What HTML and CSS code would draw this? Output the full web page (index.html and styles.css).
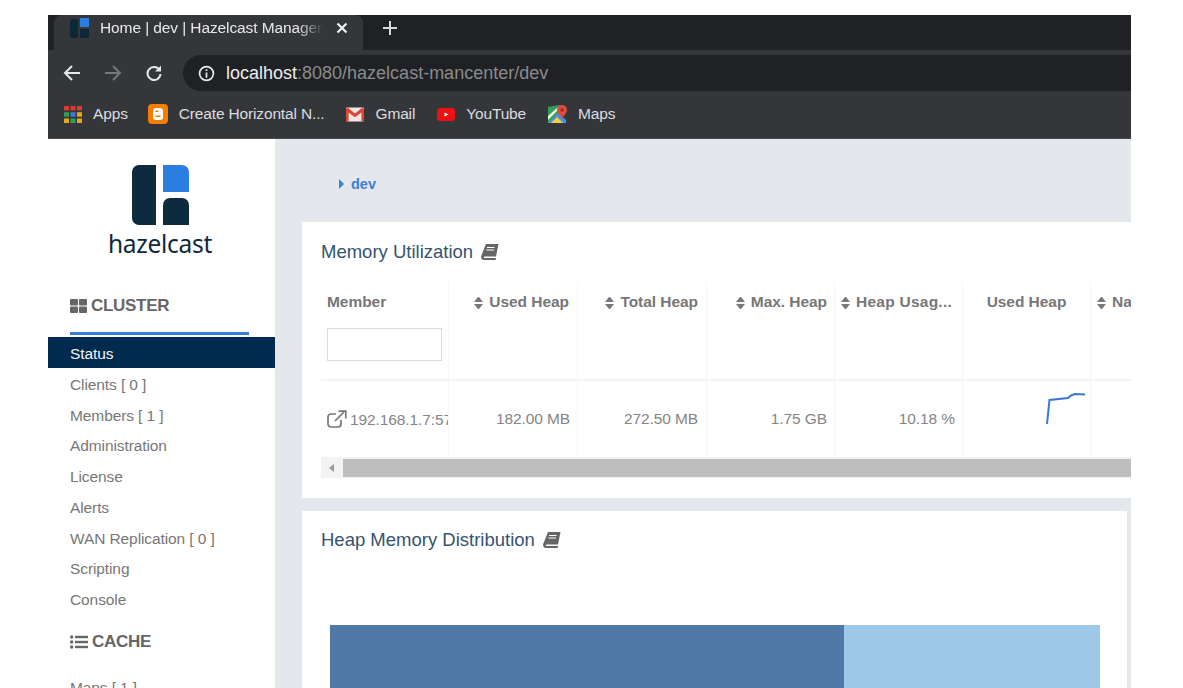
FILE: index.html
```html
<html>
  <head>
    <link rel="stylesheet" href="styles.css">
    <title>Home | dev | Hazelcast Management Center</title>
  </head>
  <body>
    <div class="window">
      <div class="tabstrip">
        <div class="tab">
          <svg class="favicon" viewBox="0 0 19 20"><rect x="0" y="1" width="8" height="19" rx="2" fill="#0c2736"/><rect x="10" y="0" width="9" height="9" fill="#2a7de1"/><rect x="10" y="11" width="9" height="9" fill="#0c2736"/></svg>
          <span class="tab-title">Home | dev | Hazelcast Managem</span>
          <svg class="tab-close" viewBox="0 0 12 12"><path d="M1.500 1.500l9 9M10.500 1.500l-9 9"/></svg>
        </div>
        <svg class="tab-new" viewBox="0 0 16 16"><path d="M8 1v14M1 8h14"/></svg>
      </div>
      <div class="toolbar">
        <svg class="nav" viewBox="0 0 18 18"><path d="M17 9H2M9 2L2 9l7 7"/></svg>
        <svg class="nav nav-off" viewBox="0 0 18 18"><path d="M1 9h15M9 2l7 7-7 7"/></svg>
        <svg class="nav" viewBox="0 0 18 18"><path d="M14.500 6A6.500 6.500 0 1 0 15.500 10"/><path class="fill" d="M16 1.500v6h-6z"/></svg>
        <div class="omnibox">
          <svg class="info" viewBox="0 0 16 16"><circle cx="8" cy="8" r="6.500"/><path d="M8 7v5M8 4v1.600"/></svg>
          <span class="host">localhost</span><span class="path">:8080/hazelcast-mancenter/dev</span>
        </div>
      </div>
      <div class="bookmarks">
        <div class="bookmark bookmark-apps">
          <svg class="bm-icon" viewBox="0 0 18 17">
            <rect x="0" y="0" width="5" height="4.500" fill="#d9392f"/><rect x="6.500" y="0" width="5" height="4.500" fill="#d9392f"/><rect x="13" y="0" width="5" height="4.500" fill="#d9392f"/>
            <rect x="0" y="6.200" width="5" height="4.500" fill="#2f9e57"/><rect x="6.500" y="6.200" width="5" height="4.500" fill="#3b78d8"/><rect x="13" y="6.200" width="5" height="4.500" fill="#e6a817"/>
            <rect x="0" y="12.500" width="5" height="4.500" fill="#e6a817"/><rect x="6.500" y="12.500" width="5" height="4.500" fill="#2f9e57"/><rect x="13" y="12.500" width="5" height="4.500" fill="#e6a817"/>
          </svg>
          Apps
        </div>
        <div class="bookmark">
          <svg class="bm-icon bm-wide" viewBox="0 0 20 20"><rect width="20" height="20" rx="4" fill="#f57d00"/><rect x="5" y="4" width="10" height="12" rx="3" fill="#fff"/><path d="M7.500 7.300h3M7.500 12.300h5" stroke="#f57d00" stroke-width="1.600"/></svg>
          Create Horizontal N...
        </div>
        <div class="bookmark">
          <svg class="bm-icon" viewBox="0 0 18 14"><rect width="18" height="14" rx="1" fill="#f3e6e3"/><path d="M0 1.500V14h2.600V5L9 9.800 15.400 5V14H18V1.500L16.500 0 9 6 1.500 0z" fill="#d8453b"/></svg>
          Gmail
        </div>
        <div class="bookmark">
          <svg class="bm-icon" viewBox="0 0 18 14"><rect width="18" height="13" y="0.500" rx="3.500" fill="#ee1111"/><path d="M7.500 5l4 2-4 2z" fill="#fff"/></svg>
          YouTube
        </div>
        <div class="bookmark">
          <svg class="bm-icon bm-maps" viewBox="0 0 19 18"><path d="M0 2l12-2v18H0z" fill="#2fa35a"/><path d="M0 18L10 8l8 7v3z" fill="#4a90e2"/><path d="M0 11L9 3h3L0 15z" fill="#f4efe0"/><path d="M3 18l6-6 6 6z" fill="#f3cf45"/><path d="M14 0a5 5 0 0 1 5 5c0 3-3 5-5 9-2-4-5-6-5-9a5 5 0 0 1 5-5z" fill="#dd4b3e"/><circle cx="14" cy="5" r="1.800" fill="#9e2a20"/></svg>
          Maps
        </div>
      </div>

      <div class="app">
        <div class="sidebar">
          <div class="logo">
            <svg class="logo-mark" viewBox="0 0 57 60">
              <path d="M7 0h17v60H7a7 7 0 0 1-7-7V7a7 7 0 0 1 7-7z" fill="#0d2b3e"/>
              <path d="M31 0h19a7 7 0 0 1 7 7v20H31z" fill="#2a7de1"/>
              <path d="M38 33h12a7 7 0 0 1 7 7v20H31V40a7 7 0 0 1 7-7z" fill="#0d2b3e"/>
            </svg>
            <div class="logo-text">hazelcast</div>
          </div>
          <div class="nav-head nav-head-first">
            <svg class="head-icon" viewBox="0 0 17 14"><rect width="8" height="6.500" rx="1"/><rect x="9" width="8" height="6.500" rx="1"/><rect y="7.500" width="8" height="6.500" rx="1"/><rect x="9" y="7.500" width="8" height="6.500" rx="1"/></svg>
            <span>CLUSTER</span>
          </div>
          <div class="nav-rule"></div>
          <ul class="menu">
            <li class="active">Status</li>
            <li>Clients [ 0 ]</li>
            <li>Members [ 1 ]</li>
            <li>Administration</li>
            <li>License</li>
            <li>Alerts</li>
            <li>WAN Replication [ 0 ]</li>
            <li>Scripting</li>
            <li>Console</li>
          </ul>
          <div class="nav-head nav-head-cache">
            <svg class="head-icon head-icon-list" viewBox="0 0 18 14"><circle cx="1.700" cy="2" r="1.700"/><circle cx="1.700" cy="7" r="1.700"/><circle cx="1.700" cy="12" r="1.700"/><rect x="5" y="0.800" width="13" height="2.400"/><rect x="5" y="5.800" width="13" height="2.400"/><rect x="5" y="10.800" width="13" height="2.400"/></svg>
            <span>CACHE</span>
          </div>
          <ul class="menu menu-cache">
            <li>Maps [ 1 ]</li>
          </ul>
        </div>

        <div class="content">
          <div class="crumb"><span class="crumb-arrow"></span>dev</div>

          <div class="panel">
            <h3 class="panel-title">Memory Utilization
              <svg class="book" viewBox="0 0 18 16"><path d="M5 0h12.500L15 12.500H3.500c-1 0-1 1.500 0 1.500h11.500l-.4 2H3C.5 16-.3 14 .2 12z"/><path d="M6 3.500h7.500M5.500 6h7.500" stroke="#fff" stroke-width="1"/></svg>
            </h3>
            <div class="grid-wrap">
              <div class="grid grid-head">
                <div class="cell cell-member">
                  <div class="head-label">Member</div>
                  <input class="filter">
                </div>
                <div class="cell head-right pad-8"><span class="sort"></span>Used Heap</div>
                <div class="cell head-right pad-8"><span class="sort"></span>Total Heap</div>
                <div class="cell head-right"><span class="sort"></span>Max. Heap</div>
                <div class="cell head-usage"><span class="sort"></span>Heap Usag...</div>
                <div class="cell head-center">Used Heap</div>
                <div class="cell head-clip"><span class="sort"></span>Name</div>
              </div>
              <div class="grid grid-row">
                <div class="cell cell-ip">
                  <svg class="ext" viewBox="0 0 20 18"><path d="M14 10v4a3 3 0 0 1-3 3H4a3 3 0 0 1-3-3V7a3 3 0 0 1 3-3h5"/><path d="M8 11L17 2M11.500 1.200H18.800V8.500"/></svg>
                  <span>192.168.1.7:5701</span>
                </div>
                <div class="cell num">182.00 MB</div>
                <div class="cell num pad-8">272.50 MB</div>
                <div class="cell num">1.75 GB</div>
                <div class="cell num">10.18 %</div>
                <div class="cell cell-spark">
                  <svg class="spark" viewBox="0 0 40 33"><path d="M1 32L3.500 8 22 6l3-2.500L29 2l10 .5"/></svg>
                </div>
                <div class="cell"></div>
              </div>
              <div class="hscroll">
                <span class="hscroll-arrow"></span>
                <div class="hscroll-thumb"></div>
              </div>
            </div>
          </div>

          <div class="panel panel-heap">
            <h3 class="panel-title">Heap Memory Distribution
              <svg class="book" viewBox="0 0 18 16"><path d="M5 0h12.500L15 12.500H3.500c-1 0-1 1.500 0 1.500h11.500l-.4 2H3C.5 16-.3 14 .2 12z"/><path d="M6 3.500h7.500M5.500 6h7.500" stroke="#fff" stroke-width="1"/></svg>
            </h3>
            <div class="bar">
              <div class="bar-used"></div>
              <div class="bar-free"></div>
            </div>
          </div>
        </div>
      </div>
    </div>
  </body>
</html>
```

FILE: styles.css
```css
html, body {
  margin: 0;
  height: 100%;
  overflow: hidden;
  background: #fff;
}

body {
  font-family: "Liberation Sans", Arial, sans-serif;
  color: #6f6f6f;
}

.window {
  margin: 15px 0 0 48px;
  width: 1083px;
  height: 673px;
  overflow: hidden;
  display: flex;
  flex-direction: column;
}

/* browser chrome */
.tabstrip {
  height: 35px;
  background: #202124;
  display: flex;
  align-items: flex-start;
  flex: none;
}

.tab {
  width: 309px;
  height: 35px;
  margin-left: 6px;
  padding: 0 0 9px 16px;
  box-sizing: border-box;
  background: #35363a;
  border-radius: 8px 8px 0 0;
  display: flex;
  align-items: center;
  color: #e8e9eb;
  font-size: 15.500px;
  letter-spacing: -0.1px;
  flex: none;
}

.favicon {
  width: 19px;
  height: 20px;
  flex: none;
  margin-right: 11px;
}

.tab-title {
  width: 224px;
  flex: none;
  white-space: nowrap;
  overflow: hidden;
  -webkit-mask-image: linear-gradient(90deg, #000 88%, transparent 100%);
  mask-image: linear-gradient(90deg, #000 88%, transparent 100%);
  margin-right: 12px;
}

.tab-close {
  width: 12px;
  height: 12px;
  flex: none;
  fill: none;
  stroke: #eceef0;
  stroke-width: 2.200;
}

.tab-new {
  width: 16px;
  height: 16px;
  margin: 5px 0 0 19px;
  flex: none;
  fill: none;
  stroke: #d8d9dc;
  stroke-width: 2;
}

.toolbar {
  height: 45px;
  background: #35363a;
  display: flex;
  align-items: center;
  flex: none;
  padding-left: 15px;
}

.nav {
  width: 18px;
  height: 18px;
  flex: none;
  margin: 1px 23px 0 0;
  fill: none;
  stroke: #e6e7e9;
  stroke-width: 2;
}

.nav .fill {
  fill: #e6e7e9;
  stroke: none;
}

.nav-off {
  stroke: #76777a;
}

.nav:nth-of-type(3) {
  margin-right: 20px;
}

.omnibox {
  flex: 1;
  height: 36px;
  margin: 1px -30px 0 0;
  padding-left: 15px;
  background: #202124;
  border-radius: 18px;
  display: flex;
  align-items: center;
  font-size: 18px;
}

.info {
  width: 17px;
  height: 17px;
  margin-right: 11px;
  fill: none;
  stroke: #e8eaed;
  stroke-width: 1.600;
}

.host {
  color: #eceded;
}

.path {
  color: #8a8b8e;
}

.bookmarks {
  height: 44px;
  background: #35363a;
  border-bottom: 1px solid #4a4b4e;
  box-sizing: border-box;
  display: flex;
  align-items: center;
  padding: 0 0 5px 16px;
  flex: none;
  color: #dcdde0;
  font-size: 15.500px;
  letter-spacing: -0.15px;
}

.bookmark {
  display: flex;
  align-items: center;
  margin-right: 22px;
  white-space: nowrap;
}

.bookmark-apps {
  margin-right: 20px;
}

.bm-icon {
  width: 18px;
  height: 17px;
  margin-right: 11px;
  flex: none;
}

.bm-wide {
  width: 20px;
  height: 20px;
}

.bm-maps {
  width: 19px;
  height: 18px;
}

/* app */
.app {
  flex: 1;
  display: flex;
  min-height: 0;
  background: #e4e7ec;
}

.sidebar {
  width: 227px;
  flex: none;
  background: #fff;
}

.logo {
  padding: 26px 3px 0 0;
  height: 120px;
  box-sizing: border-box;
  display: flex;
  flex-direction: column;
  align-items: center;
}

.logo-mark {
  width: 57px;
  height: 60px;
  flex: none;
}

.logo-text {
  margin-top: 4px;
  color: #10293a;
  font-family: "Noto Sans", sans-serif;
  font-size: 24.500px;
  line-height: 30px;
  letter-spacing: -0.3px;
}

.nav-head {
  display: flex;
  align-items: center;
  padding-left: 22px;
  font-size: 17px;
  font-weight: bold;
  line-height: 24px;
  color: #666;
  letter-spacing: -0.3px;
}

.nav-head-first {
  margin-top: 35px;
}

.head-icon {
  width: 17px;
  height: 14px;
  margin-right: 4px;
  fill: #666;
}

.head-icon-list {
  width: 18px;
}

.nav-rule {
  height: 3px;
  margin: 14px 26px 2px 22px;
  background: #3a7bd5;
}

.menu {
  list-style: none;
  margin: 0;
  padding: 0;
  font-size: 15.500px;
  letter-spacing: -0.1px;
}

.menu li {
  height: 30.750px;
  line-height: 33px;
  padding-left: 22px;
  color: #777;
  white-space: nowrap;
}

.menu li.active {
  background: #002b4f;
  color: #f2f4f6;
}

.nav-head-cache {
  margin-top: 16.250px;
}

.menu-cache {
  margin-top: 17px;
}

.content {
  flex: 1;
  min-width: 0;
  padding-left: 27px;
}

.crumb {
  height: 83px;
  box-sizing: border-box;
  padding: 36px 0 0 37px;
  font-size: 14.500px;
  line-height: 18px;
  font-weight: bold;
  color: #3f7fd6;
  display: flex;
  align-items: flex-start;
}

.crumb-arrow {
  width: 0;
  height: 0;
  margin: 4px 7px 0 0;
  border-left: 5px solid #3f7fd6;
  border-top: 5px solid transparent;
  border-bottom: 5px solid transparent;
}

.panel {
  background: #fff;
  height: 276px;
  padding: 18px 0 0 19px;
  box-sizing: border-box;
  overflow: hidden;
}

.panel-heap {
  margin: 13px 4px 0 0;
  padding-top: 17px;
  height: 400px;
}

.panel-title {
  margin: 0;
  height: 23px;
  line-height: 23px;
  font-size: 18.500px;
  font-weight: normal;
  color: #35546f;
  display: flex;
  align-items: center;
}

.book {
  width: 18px;
  height: 16px;
  margin-left: 8px;
  fill: #666;
}

.grid-wrap {
  margin-top: 19px;
}

.grid {
  display: grid;
  grid-template-columns: 128px 129px 129px 128px 128px 128px 60px;
}

.grid-head {
  height: 99px;
  border-bottom: 2px solid #f3f4f5;
  box-sizing: border-box;
  font-size: 15.500px;
  font-weight: bold;
  color: #777;
  letter-spacing: -0.05px;
}

.grid-row {
  height: 76px;
  font-size: 15.500px;
  color: #858585;
  letter-spacing: -0.1px;
}

.cell {
  border-right: 1px solid #f6f6f7;
  box-sizing: border-box;
  white-space: nowrap;
  overflow: hidden;
}

.grid-head .cell {
  padding-top: 10px;
  line-height: 20px;
}

.cell-member {
  padding-left: 6px;
}

.head-label {
  height: 36px;
}

.filter {
  display: block;
  width: 115px;
  height: 33px;
  box-sizing: border-box;
  border: 1px solid #dcdcdc;
  background: #fff;
  padding: 0;
  margin: 0;
}

.head-right {
  text-align: right;
  padding-right: 7px;
}

.head-usage {
  padding-left: 6px;
  letter-spacing: 0.25px;
}

.head-center {
  text-align: center;
}

.head-clip {
  padding-left: 6px;
  border-right: none;
}

.sort {
  display: inline-flex;
  flex-direction: column;
  justify-content: space-between;
  width: 9px;
  height: 12px;
  margin-right: 6px;
  vertical-align: middle;
}

.sort::before,
.sort::after {
  content: "";
  border-left: 4.500px solid transparent;
  border-right: 4.500px solid transparent;
}

.sort::before {
  border-bottom: 5px solid #777;
}

.sort::after {
  border-top: 5px solid #777;
}

.grid-row .cell {
  padding-top: 28px;
  line-height: 20px;
}

.cell-ip {
  padding-left: 6px;
  display: flex;
  align-items: flex-start;
}

.ext {
  width: 20px;
  height: 18px;
  flex: none;
  margin: 1px 3px 0 0;
  stroke: #777;
  stroke-width: 1.700;
  fill: none;
}

.cell-ip span {
  margin-top: 1px;
}

.num {
  text-align: right;
  padding-right: 7px;
}

.num.pad-8,
.head-right.pad-8 {
  padding-right: 8px;
}

.grid-row .cell-spark {
  padding-top: 0;
}

.spark {
  display: block;
  width: 40px;
  height: 33px;
  margin: 11px 0 0 83px;
  fill: none;
  stroke: #3a78d4;
  stroke-width: 2;
}

.hscroll {
  height: 21px;
  background: #f3f3f3;
  display: flex;
  align-items: center;
  padding: 1px 0 0 8px;
  box-sizing: border-box;
}

.hscroll-arrow {
  width: 0;
  height: 0;
  flex: none;
  margin-right: 9px;
  border-right: 5px solid #999;
  border-top: 4px solid transparent;
  border-bottom: 4px solid transparent;
}

.hscroll-thumb {
  flex: 1;
  height: 18px;
  background: #bebebe;
}

.bar {
  display: flex;
  height: 200px;
  margin: 74px 27px 0 9px;
}

.bar-used {
  width: 514px;
  background: #4f78a6;
}

.bar-free {
  flex: 1;
  background: #9dc8e8;
}
```
